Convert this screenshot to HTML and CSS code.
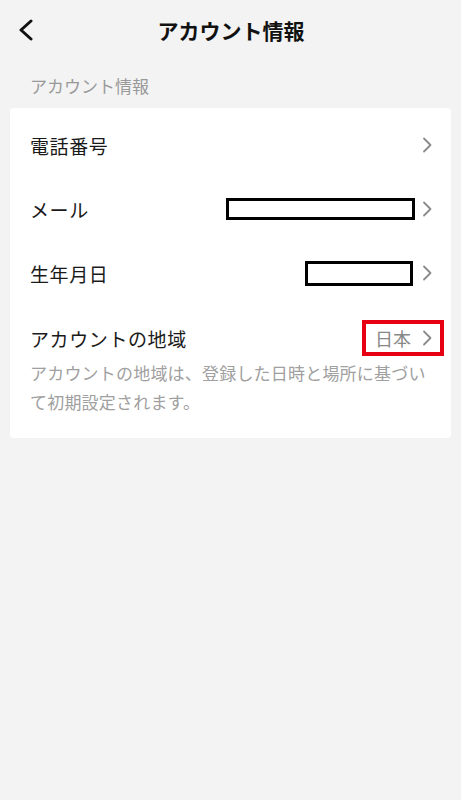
FILE: index.html
```html
<!DOCTYPE html>
<html lang="ja">

<head>
	<meta charset="UTF-8" />
	<meta name="viewport" content="width=device-width, initial-scale=1.0" />
	<title>アカウント情報</title>
	<link rel="stylesheet" href="styles.css">
</head>

<body>
	<div class="header">
		<a class="back" href="javascript:;">
			<svg width="16" height="22" viewBox="0 0 16 22"><path d="M13 2 L3 11 L13 20" fill="none" stroke="#111" stroke-width="3" stroke-linecap="round" stroke-linejoin="round" /></svg>
		</a>
		<h1 class="title">アカウント情報</h1>
	</div>

	<div class="section-label">アカウント情報</div>

	<div class="card">
		<div class="row">
			<span class="label">電話番号</span>
			<span class="right">
				<svg class="arrow" width="10" height="16" viewBox="0 0 10 16"><path d="M2 1.5 L8.5 8 L2 14.5" fill="none" stroke="#8a8a8a" stroke-width="1.8" stroke-linecap="round" stroke-linejoin="round" /></svg>
			</span>
		</div>
		<div class="row">
			<span class="label">メール</span>
			<span class="right">
				<span class="mask mask-mail"></span>
				<svg class="arrow" width="10" height="16" viewBox="0 0 10 16"><path d="M2 1.5 L8.5 8 L2 14.5" fill="none" stroke="#8a8a8a" stroke-width="1.8" stroke-linecap="round" stroke-linejoin="round" /></svg>
			</span>
		</div>
		<div class="row">
			<span class="label">生年月日</span>
			<span class="right">
				<span class="mask mask-birth"></span>
				<svg class="arrow" width="10" height="16" viewBox="0 0 10 16"><path d="M2 1.5 L8.5 8 L2 14.5" fill="none" stroke="#8a8a8a" stroke-width="1.8" stroke-linecap="round" stroke-linejoin="round" /></svg>
			</span>
		</div>
		<div class="region">
			<div class="region-head">
				<span class="label">アカウントの地域</span>
				<span class="region-value">
					<span class="value">日本</span>
					<svg class="arrow" width="10" height="16" viewBox="0 0 10 16"><path d="M2 1.5 L8.5 8 L2 14.5" fill="none" stroke="#8a8a8a" stroke-width="1.8" stroke-linecap="round" stroke-linejoin="round" /></svg>
				</span>
			</div>
			<p class="note">アカウントの地域は、登録した日時と場所に基づいて初期設定されます。</p>
		</div>
	</div>
</body>

</html>
```

FILE: styles.css
```css
* {
	padding: 0px;
	margin: 0px;
	box-sizing: border-box;
}

body {
	background-color: #f3f3f3;
	font-family: "Noto Sans CJK JP", "Noto Sans", sans-serif;
	color: #1a1a1a;
	width: 461px;
	min-height: 800px;
}

.header {
	height: 59px;
	display: flex;
	align-items: center;
	justify-content: center;
	position: relative;
}

.back {
	position: absolute;
	left: 18px;
	top: 19px;
	display: block;
	width: 16px;
	height: 22px;
}

.back svg {
	display: block;
}

.title {
	font-size: 21px;
	font-weight: bold;
	color: #111;
	line-height: 30px;
	margin-left: 1px;
}

.section-label {
	font-size: 17px;
	color: #999;
	line-height: 28px;
	padding-left: 30px;
	margin-top: 13px;
	height: 36px;
}

.card {
	background-color: #fff;
	margin: 0 10px;
	border-radius: 4px;
	padding-top: 5px;
	padding-bottom: 22px;
}

.row,
.region-head {
	display: flex;
	align-items: center;
	justify-content: space-between;
	padding: 0 19px 0 20px;
}

.row {
	height: 64px;
}

.label {
	font-size: 19px;
	letter-spacing: 0.6px;
	color: #1a1a1a;
}

.right {
	display: flex;
	align-items: center;
}

.arrow {
	display: block;
}

.mask {
	display: block;
	border: 3px solid #000;
	background-color: #fff;
	margin-right: 7px;
}

.mask-mail {
	width: 189px;
	height: 22px;
}

.mask-birth {
	width: 108px;
	height: 25px;
	margin-right: 9px;
}

.region {
	padding-top: 15px;
}

.region-head {
	height: 36px;
}

.region-value {
	display: flex;
	align-items: center;
	height: 36px;
	border: 4px solid #e60012;
	padding: 0 8px 0 9px;
	margin-right: -12px;
}

.value {
	font-size: 18px;
	color: #888;
	margin-right: 11px;
}

.note {
	font-size: 17px;
	color: #a0a0a0;
	line-height: 29px;
	letter-spacing: 0.2px;
	padding: 0 24px 0 20px;
	margin-top: 2px;
}
```
